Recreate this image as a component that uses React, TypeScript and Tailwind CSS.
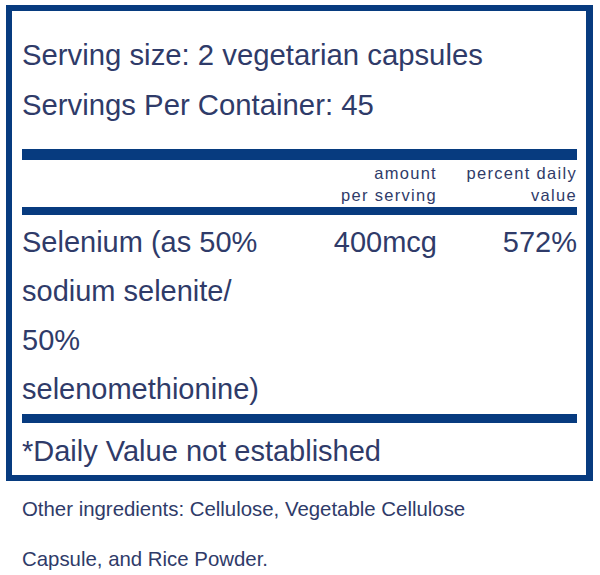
const NAVY = 'bg-[#073b7f]';

const Rule = ({ h }: { h: string }) => <div className={`${NAVY} ${h} w-full`} />;

export default function App() {
  return (
    <div className="w-[600px] h-[575px] bg-white text-[#2f3b69] font-['Liberation_Sans',Arial,sans-serif] overflow-hidden">
      <div className="ml-[6px] mt-[5px] w-[587px] border-[6px] border-r-[7px] border-[#073b7f] pl-[10px] pr-[9px] pt-[19px] pb-[4px]">
        <div className="text-[29.3px] leading-[50px]">
          <p>Serving size: 2 vegetarian capsules</p>
          <p>Servings Per Container: 45</p>
        </div>

        <div className="mt-[19px]">
          <Rule h="h-[11px]" />
        </div>

        <div className="grid grid-cols-[255px_160px_140px] pt-[2px] pb-[1px] text-[16.5px] leading-[22px] tracking-[1.3px] text-right">
          <div />
          <div>
            amount
            <br />
            per serving
          </div>
          <div>
            percent daily
            <br />
            value
          </div>
        </div>

        <Rule h="h-[8px]" />

        <div className="grid grid-cols-[255px_160px_140px] pt-[3px] text-[29px] leading-[49px]">
          <div>Selenium (as 50% sodium selenite/ 50% selenomethionine)</div>
          <div className="text-right">400mcg</div>
          <div className="text-right">572%</div>
        </div>

        <Rule h="h-[9px]" />

        <p className="pt-[8px] text-[29px] leading-[40px]">*Daily Value not established</p>
      </div>

      <p className="mt-[3px] ml-[22px] max-w-[480px] text-[20.4px] leading-[50px]">
        Other ingredients: Cellulose, Vegetable Cellulose Capsule, and Rice Powder.
      </p>
    </div>
  );
}
